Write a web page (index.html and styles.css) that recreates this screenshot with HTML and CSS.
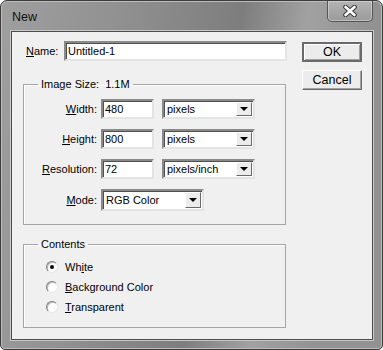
FILE: index.html
```html
<!DOCTYPE html>
<html>
<head>
<meta charset="utf-8">
<link rel="stylesheet" href="styles.css">
</head>
<body>
<div class="window">
  <div class="titlebar">
    <span class="title">New</span>
    <div class="close">
      <svg width="16" height="12" viewBox="0 0 16 12">
        <path d="M3.5 2 L12.5 10 M12.5 2 L3.5 10" stroke="#3a3a3a" stroke-width="4.6" stroke-linecap="round"/>
        <path d="M3.5 2 L12.5 10 M12.5 2 L3.5 10" stroke="#ffffff" stroke-width="2.6" stroke-linecap="round"/>
      </svg>
    </div>
  </div>
  <div class="panel">
    <div class="leftcol">
      <div class="namerow">
        <span class="lbl"><u>N</u>ame:</span>
        <div class="field name">Untitled-1</div>
      </div>
      <fieldset class="group size">
        <legend>Image Size:&nbsp; 1.1M</legend>
        <div class="grid">
          <span class="lbl r"><u>W</u>idth:</span>
          <div class="field num">480</div>
          <div class="select unit"><span>pixels</span><i class="arrow"></i></div>
          <span class="lbl r"><u>H</u>eight:</span>
          <div class="field num">800</div>
          <div class="select unit"><span>pixels</span><i class="arrow"></i></div>
          <span class="lbl r"><u>R</u>esolution:</span>
          <div class="field num">72</div>
          <div class="select unit"><span>pixels/inch</span><i class="arrow"></i></div>
          <span class="lbl r"><u>M</u>ode:</span>
          <div class="select mode"><span>RGB Color</span><i class="arrow"></i></div>
        </div>
      </fieldset>
      <fieldset class="group contents">
        <legend>Contents</legend>
        <div class="radios">
          <div class="radio"><i class="dot on"></i><span>Wh<u>i</u>te</span></div>
          <div class="radio"><i class="dot"></i><span><u>B</u>ackground Color</span></div>
          <div class="radio"><i class="dot"></i><span><u>T</u>ransparent</span></div>
        </div>
      </fieldset>
    </div>
    <div class="rightcol">
      <div class="btn default">OK</div>
      <div class="btn">Cancel</div>
    </div>
  </div>
</div>
</body>
</html>
```

FILE: styles.css
```css
html, body {
  margin: 0;
  padding: 0;
  background: #ffffff;
}
body {
  width: 383px;
  height: 350px;
  overflow: hidden;
  font-family: "Liberation Sans", Arial, sans-serif;
  font-size: 11px;
  color: #000;
}
.window {
  box-sizing: border-box;
  width: 383px;
  height: 350px;
  border: 1px solid #3c3c3c;
  border-radius: 7px 7px 5px 5px;
  background:
    linear-gradient(100deg, rgba(255,255,255,0.12) 0%, rgba(255,255,255,0) 25%, rgba(0,0,0,0.14) 55%, rgba(255,255,255,0.14) 70%, rgba(0,0,0,0) 85%),
    #929292;
  box-shadow: inset 0 0 0 1px #bcbcbc;
  display: flex;
  flex-direction: column;
}
.titlebar {
  height: 30px;
  display: flex;
  align-items: flex-start;
}
.title {
  margin: 9px 0 0 11px;
  font-size: 12.5px;
  line-height: 15px;
  color: #111;
}
.close {
  margin-left: auto;
  margin-right: 9px;
  width: 46px;
  height: 21px;
  box-sizing: border-box;
  border: 1px solid #555;
  border-top: none;
  border-radius: 0 0 5px 5px;
  background: linear-gradient(#b4b4b4, #9a9a9a);
  box-shadow: inset 0 0 0 1px rgba(255,255,255,0.35);
  display: flex;
  align-items: center;
  justify-content: center;
}
.panel {
  flex: 1;
  margin: 0 9px 9px 10px;
  box-sizing: border-box;
  background: #f0f0f0;
  border: 1px solid #4e4e4e;
  box-shadow: 0 0 0 1px #c8c8c8;
  display: flex;
  padding: 9px 0 0 11px;
}
.leftcol {
  width: 264px;
}
.namerow {
  display: flex;
  align-items: center;
  height: 20px;
}
.namerow .lbl {
  margin-left: 3px;
  width: 38px;
}
.field {
  box-sizing: border-box;
  height: 20px;
  background: #fff;
  border: 2px solid;
  border-color: #8a8a8a #e4e4e4 #e4e4e4 #8a8a8a;
  box-shadow: inset 1px 1px 0 #505050;
  padding: 1px 0 0 2px;
  line-height: 15px;
}
.field.name {
  width: 223px;
  flex: none;
}
.group {
  margin: 0;
  padding: 0;
  border: 1px solid #a5a5a5;
  box-shadow: inset 1px 1px 0 #fff;
  width: 263px;
  box-sizing: border-box;
}
.group legend {
  margin-left: 14px;
  padding: 0 3px;
  line-height: 13px;
}
.size {
  margin-top: 17px;
  padding: 8px 0 13px;
}
.grid {
  display: grid;
  grid-template-columns: 73px 53px 93px;
  column-gap: 4px;
  row-gap: 10px;
  align-items: center;
}
.grid .field.num {
  width: 53px;
}
.grid .select.unit {
  margin-left: 4px;
  width: 93px;
}
.lbl.r {
  text-align: right;
}
.select {
  box-sizing: border-box;
  height: 20px;
  background: #fff;
  border: 2px solid;
  border-color: #8a8a8a #e4e4e4 #e4e4e4 #8a8a8a;
  box-shadow: inset 1px 1px 0 #505050;
  display: flex;
  align-items: center;
  padding-left: 3px;
}
.select span {
  flex: 1;
}
.select.mode {
  grid-column: 2 / 4;
  width: 103px;
  height: 22px;
}
.arrow {
  width: 16px;
  height: 14px;
  margin-right: 1px;
  box-sizing: border-box;
  background: #ececec;
  border: 1px solid;
  border-color: #fff #6a6a6a #6a6a6a #fff;
  position: relative;
}
.select.mode .arrow {
  height: 16px;
}
.arrow::after {
  content: "";
  position: absolute;
  left: 3px;
  top: 50%;
  margin-top: -2px;
  border-left: 4px solid transparent;
  border-right: 4px solid transparent;
  border-top: 4px solid #000;
}
.contents {
  margin-top: 13px;
  padding: 6px 0 10px;
}
.radios {
  display: flex;
  flex-direction: column;
  padding-left: 22px;
}
.radio {
  height: 20px;
  display: flex;
  align-items: center;
}
.dot {
  width: 12px;
  height: 12px;
  box-sizing: border-box;
  border-radius: 50%;
  border: 1px solid;
  border-color: #7c7c7c #e8e8e8 #e8e8e8 #7c7c7c;
  background: #fff;
  box-shadow: inset 1px 1px 0 #c0c0c0;
  margin-right: 7px;
  position: relative;
}
.dot.on::after {
  content: "";
  position: absolute;
  left: 3px;
  top: 3px;
  width: 4px;
  height: 4px;
  border-radius: 50%;
  background: #000;
}
.rightcol {
  margin-left: 15px;
  padding-top: 1px;
  display: flex;
  flex-direction: column;
  gap: 8px;
}
.btn {
  box-sizing: border-box;
  width: 60px;
  height: 20px;
  background: #ececec;
  border: 1px solid;
  border-color: #fff #6a6a6a #6a6a6a #fff;
  box-shadow: inset -1px -1px 0 #a0a0a0;
  display: flex;
  align-items: center;
  justify-content: center;
  font-size: 12.5px;
}
.btn.default {
  border: 2px solid #6a6a6a;
  box-shadow: inset 1px 1px 0 #fff, inset -1px -1px 0 #a0a0a0;
}
```
